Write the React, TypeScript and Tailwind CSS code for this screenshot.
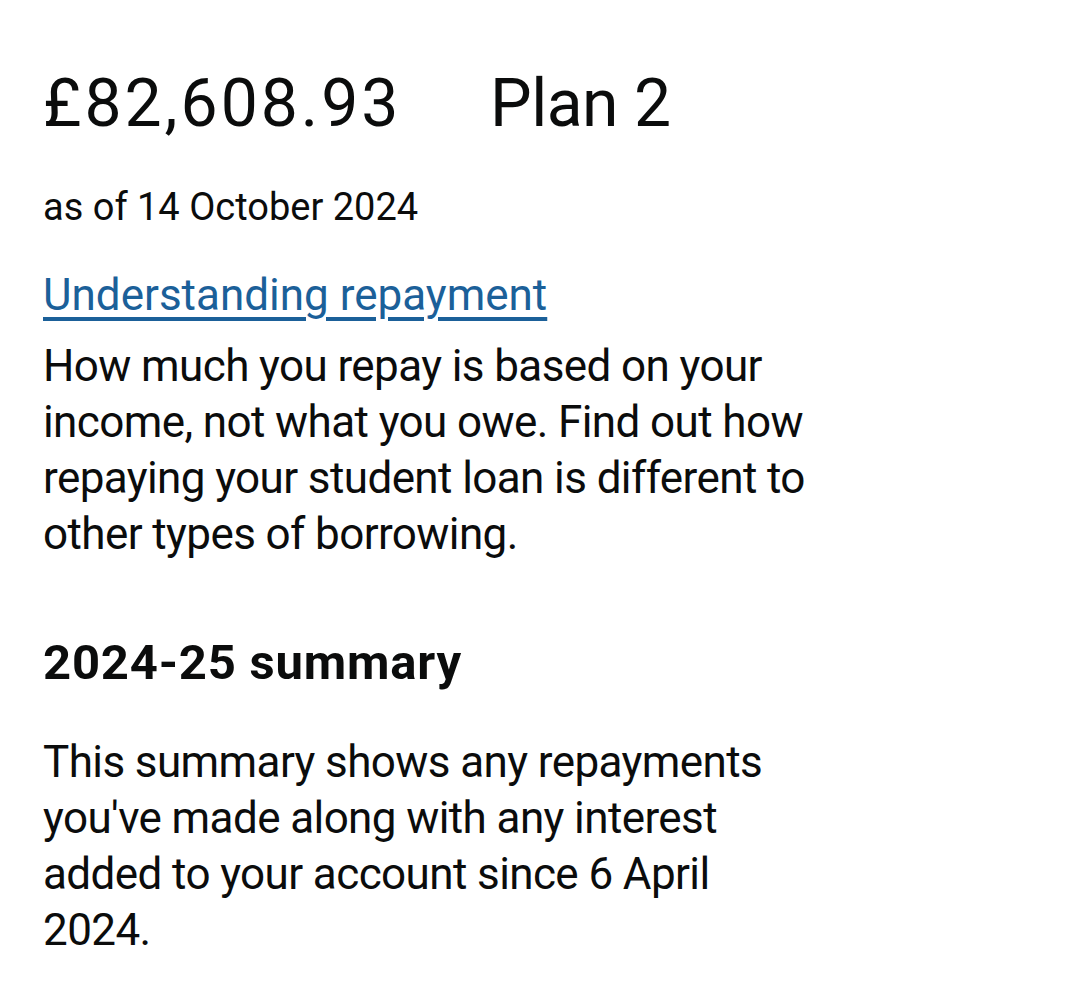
import React from "react";

export default function App() {
  const font = { fontFamily: "Roboto, 'Noto Sans', sans-serif" };
  return (
    <div className="min-h-[984px] w-[1080px] bg-white text-[#0b0c0c]" style={font}>
      <div className="pl-[43px] pt-[64px]">
        <div className="flex text-[66px] leading-[80px]">
          <span className="w-[447px] tracking-[3px]">£82,608.93</span>
          <span className="tracking-[-0.5px]">Plan 2</span>
        </div>
        <p className="mt-[39px] text-[38px] leading-[48px]">as of 14 October 2024</p>
        <div className="w-[775px]">
          <a
            href="#"
            className="mt-[36px] inline-block text-[44px] leading-[56px] text-[#1b6099] underline decoration-[4px] underline-offset-[7px]"
          >
            Understanding repayment
          </a>
          <p className="mt-[15px] text-[44px] leading-[56px] tracking-[-0.6px]">
            How much you repay is based on your income, not what you owe. Find out how repaying your student loan is different to other types of borrowing.
          </p>
          <h2 className="mt-[71px] text-[49px] leading-[60px] font-bold tracking-[0.8px]">2024-25 summary</h2>
          <p className="mt-[41px] text-[44px] leading-[56px] tracking-[-0.6px]">
            This summary shows any repayments you've made along with any interest added to your account since 6 April 2024.
          </p>
        </div>
      </div>
    </div>
  );
}
